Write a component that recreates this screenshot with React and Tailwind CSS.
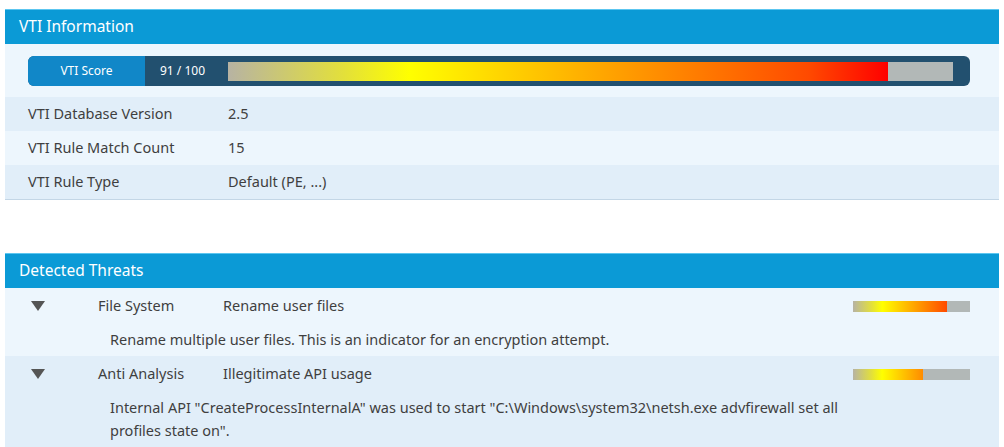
import React from 'react';

const font = { fontFamily: '"Noto Sans", "Open Sans", Arial, sans-serif' };

const GRADIENT = 'linear-gradient(to right, #b7b3a3 0%, #e3e03a 16%, #ffff00 25%, #ffa500 52%, #ff4a00 80%, #ff0000 91%, #ff0000 100%)';

const ScoreBar = ({ score, className }) => (
  <div className={`bg-[#b2b8b7] ${className}`}>
    <div
      className="h-full"
      style={{ width: `${score}%`, backgroundImage: GRADIENT, backgroundSize: `${10000 / score}% 100%` }}
    />
  </div>
);

const infoRows = [
  { label: 'VTI Database Version', value: '2.5' },
  { label: 'VTI Rule Match Count', value: '15' },
  { label: 'VTI Rule Type', value: 'Default (PE, ...)' },
];

const threats = [
  {
    category: 'File System',
    title: 'Rename user files',
    desc: 'Rename multiple user files. This is an indicator for an encryption attempt.',
    score: 80,
  },
  {
    category: 'Anti Analysis',
    title: 'Illegitimate API usage',
    desc: 'Internal API "CreateProcessInternalA" was used to start "C:\\Windows\\system32\\netsh.exe advfirewall set all profiles state on".',
    score: 60,
  },
];

const Header = ({ children }) => (
  <div className="h-[35px] bg-[#0b9ad6] border-t border-[#5cc6f0] flex items-center pl-[14px] text-white text-[15.5px]">
    {children}
  </div>
);

export default function App() {
  return (
    <div className="w-[1004px] h-[447px] bg-white overflow-hidden pt-[9px] px-[5px] text-[#3f3f3f]" style={font}>
      {/* VTI information */}
      <div className="border-b border-[#c3d6e6]">
        <Header>VTI Information</Header>
        <div className="bg-[#edf6fd] px-[23px] pt-[12px] pb-[11px]">
          <div className="h-[30px] rounded-[6px] overflow-hidden flex bg-[#22506f] w-[942px]">
            <div className="w-[117px] bg-[#1187c8] flex items-center justify-center text-[12px] text-white">VTI Score</div>
            <div className="w-[83px] flex items-center pl-[15px] text-[12px] text-white">91 / 100</div>
            <div className="flex-1 flex items-center pr-[17px]">
              <ScoreBar score={91} className="h-[19px] w-full" />
            </div>
          </div>
        </div>
        {infoRows.map((r, i) => (
          <div
            key={r.label}
            className={`h-[34px] flex items-center text-[14.5px] ${i % 2 === 0 ? 'bg-[#e1eef9]' : 'bg-[#edf6fd]'}`}
          >
            <div className="w-[223px] pl-[23px]">{r.label}</div>
            <div>{r.value}</div>
          </div>
        ))}
      </div>

      {/* Detected threats */}
      <div className="mt-[53px]">
        <Header>Detected Threats</Header>
        {threats.map((t, i) => (
          <div
            key={t.title}
            className={`text-[14.5px] ${i % 2 === 0 ? 'bg-[#edf6fd] pt-[7px] pb-[5px]' : 'bg-[#e1eef9] pt-[7px] pb-[10px]'}`}
          >
            <div className="h-[22px] flex items-center">
              <div className="w-[93px] pl-[26px] flex items-center">
                <svg width="14" height="10" viewBox="0 0 14 10">
                  <path d="M0 0 H14 L7 10 Z" fill="#555" />
                </svg>
              </div>
              <div className="w-[125px]">{t.category}</div>
              <div className="flex-1">{t.title}</div>
              <ScoreBar score={t.score} className="h-[11px] w-[117px] mr-[29px]" />
            </div>
            <div className="pl-[105px] mt-[11px] max-w-[880px] leading-[23px]">{t.desc}</div>
          </div>
        ))}
      </div>
    </div>
  );
}
